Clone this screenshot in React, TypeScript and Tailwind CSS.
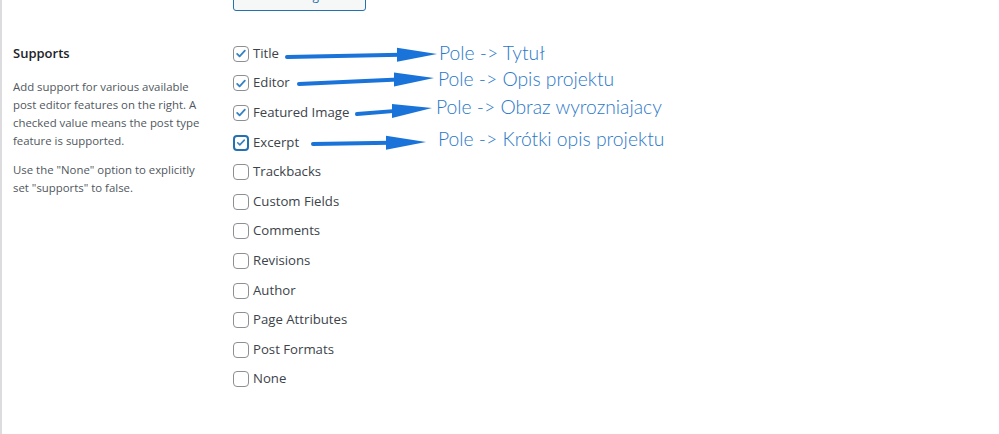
import React from 'react';

const items = [
  { label: 'Title', checked: true },
  { label: 'Editor', checked: true },
  { label: 'Featured Image', checked: true },
  { label: 'Excerpt', checked: true, focus: true },
  { label: 'Trackbacks' },
  { label: 'Custom Fields' },
  { label: 'Comments' },
  { label: 'Revisions' },
  { label: 'Author' },
  { label: 'Page Attributes' },
  { label: 'Post Formats' },
  { label: 'None' },
];

const notes = [
  { text: 'Pole -> Tytuł', x: 439, y: 42, from: [287, 57], to: [437, 54] },
  { text: 'Pole -> Opis projektu', x: 438, y: 68, from: [299, 84], to: [434, 78] },
  { text: 'Pole -> Obraz wyrozniajacy', x: 436, y: 96, from: [357, 114], to: [432, 108] },
  { text: 'Pole -> Krótki opis projektu', x: 438, y: 128, from: [313, 144], to: [426, 142] },
];

function Checkbox({ checked, focus }: { checked?: boolean; focus?: boolean }) {
  return (
    <span
      className={`flex h-4 w-4 shrink-0 items-center justify-center rounded-[4px] bg-white ${
        focus ? 'border-2 border-[#2271b1]' : 'border border-[#8c8f94]'
      }`}
    >
      {checked && (
        <svg viewBox="0 0 20 20" className="h-[15px] w-[15px]">
          <path d="M4.5 10.5l3.5 3.5 7.5-8" fill="none" stroke="#3582c4" strokeWidth="2.6" strokeLinecap="round" strokeLinejoin="round" />
        </svg>
      )}
    </span>
  );
}

function Arrow({ from, to }: { from: number[]; to: number[] }) {
  const [x1, y1] = from;
  const [x2, y2] = to;
  const hx = x2 - 36;
  const hy = y1 + ((y2 - y1) * (hx - x1)) / (x2 - x1);
  return (
    <g>
      <path d={`M${x1} ${y1} L${hx} ${hy}`} stroke="#1a73d8" strokeWidth="4" strokeLinecap="round" fill="none" />
      <path d={`M${hx - 4} ${hy - 7} L${x2} ${y2} L${hx - 4} ${hy + 7} Z`} fill="#1a73d8" />
    </g>
  );
}

export default function App() {
  return (
    <div className="relative h-[434px] w-[999px] overflow-hidden bg-white font-['Open_Sans','Noto_Sans',sans-serif]">
      <div className="flex h-full border-l-2 border-[#dcdcde]">
        <div className="w-[231px] shrink-0 pl-[11px] pt-[44px]">
          <h3 className="text-[13px] font-semibold text-[#1d2327]">Supports</h3>
          <div className="mt-[14px] w-[190px] text-[11.4px] leading-[18px] text-[#50575e]">
            <p>Add support for various available post editor features on the right. A checked value means the post type feature is supported.</p>
            <p className="mt-[11px]">Use the "None" option to explicitly set "supports" to false.</p>
          </div>
        </div>
        <div className="flex flex-col">
          <button className="-mt-[19px] h-[30px] w-[133px] rounded-[3px] border border-[#2271b1] bg-[#f6f7f7] text-[12px] text-[#2271b1]">
            Choose Image Icon
          </button>
          <ul className="mt-[28px] flex flex-col">
            {items.map((it) => (
              <li key={it.label} className="flex h-[29.6px] items-center gap-[4px] text-[13.2px] text-[#3c434a]">
                <Checkbox checked={it.checked} focus={it.focus} />
                <span>{it.label}</span>
              </li>
            ))}
          </ul>
        </div>
      </div>
      <svg className="pointer-events-none absolute inset-0" width="999" height="434">
        {notes.map((n) => (
          <Arrow key={n.text} from={n.from} to={n.to} />
        ))}
      </svg>
      {notes.map((n) => (
        <span
          key={n.text}
          className="absolute whitespace-nowrap font-['Lato',sans-serif] text-[19.3px] font-light leading-[22px] text-[#2a78c8]"
          style={{ left: n.x, top: n.y }}
        >
          {n.text}
        </span>
      ))}
    </div>
  );
}
